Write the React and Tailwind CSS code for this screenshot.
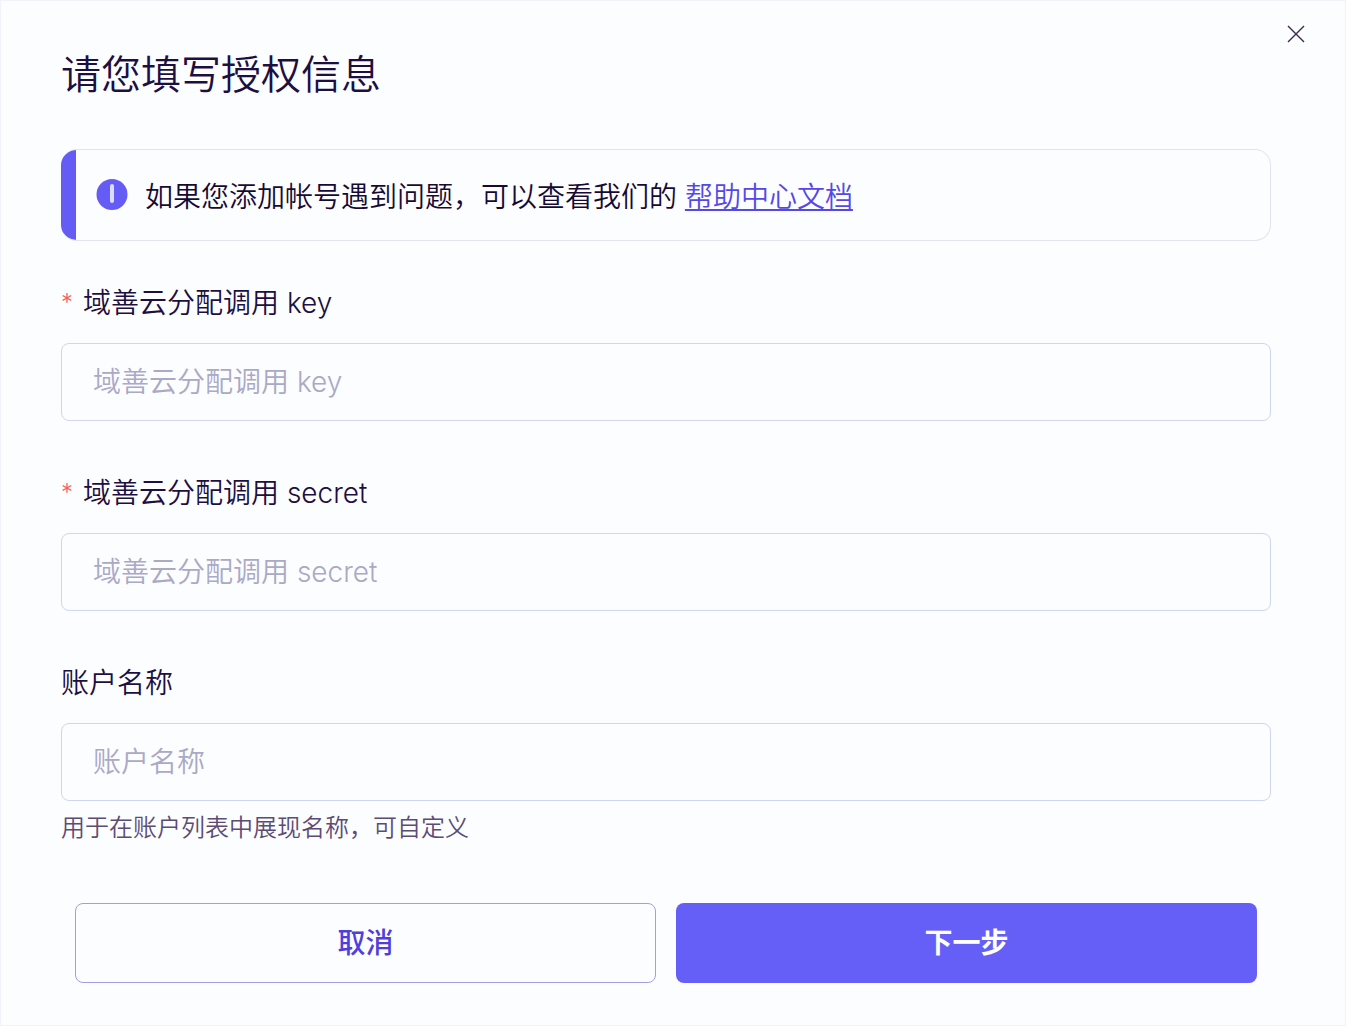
function Field({ id, label, required, hint }) {
  return (
    <div className="flex flex-col">
      <label htmlFor={id} className="flex h-10 items-center text-[#1d0f3f]">
        {required && <span className="mr-[10px] text-2xl text-[#f56060]">*</span>}
        {label}
      </label>
      <input
        id={id}
        type="text"
        required={required}
        placeholder={label}
        className="mt-5 h-[78px] w-full rounded-lg border border-[#d0d5f0] bg-transparent px-[31px] text-[#1d0f3f] outline-none placeholder:text-[#aaa9c6]"
      />
      {hint && <p className="mt-2 text-2xl leading-[38px] text-[#5c4b75]">{hint}</p>}
    </div>
  );
}

export default function App() {
  return (
    <div className="relative min-h-screen border border-[#f0f3f9] bg-[#fcfdff] pt-12 pr-[74px] pb-10 pl-15 font-['Inter','Noto_Sans_CJK_SC',sans-serif] text-[28px] font-[350]">
      {/* Close */}
      <button type="button" aria-label="关闭" className="absolute top-6 right-[39px] text-[#3a2850]">
        <svg width="20" height="20" viewBox="0 0 20 20" fill="none" stroke="currentColor" strokeWidth="1.4">
          <path d="M2 1L18 17M18 1L2 17" />
        </svg>
      </button>

      <h1 className="text-[40px] leading-[52px] text-[#1d0f3f]">请您填写授权信息</h1>

      {/* Help notice */}
      <div className="mt-12 flex h-[92px] items-center overflow-hidden rounded-2xl border border-l-0 border-[#dfe4ee] text-[#160a33]">
        <div className="h-full w-[15px] shrink-0 bg-[#655cf6]" />
        <svg className="ml-5 shrink-0" width="32" height="32" viewBox="0 0 32 32" fill="none">
          <circle cx="16" cy="15.5" r="15.5" fill="#655cf6" />
          <path d="M16 7V22" stroke="#dcdcff" strokeWidth="4" strokeLinecap="round" />
        </svg>
        <p className="mt-1 ml-[17px]">
          如果您添加帐号遇到问题，可以查看我们的{" "}
          <a href="#help" className="text-[#5548e8] underline">帮助中心文档</a>
        </p>
      </div>

      <form className="mt-[42px] flex flex-col gap-[52px]">
        <Field id="key" label="域善云分配调用 key" required />
        <Field id="secret" label="域善云分配调用 secret" required />
        <Field id="name" label="账户名称" hint="用于在账户列表中展现名称，可自定义" />

        {/* Actions */}
        <div className="mt-1 grid grid-cols-2 gap-5 px-[14px]">
          <button type="button" className="h-20 rounded-lg border border-[#a09fe0] font-medium text-[#4f40dc]">取消</button>
          <button type="submit" className="h-20 rounded-lg bg-[#655ff8] font-bold text-white">下一步</button>
        </div>
      </form>
    </div>
  );
}
